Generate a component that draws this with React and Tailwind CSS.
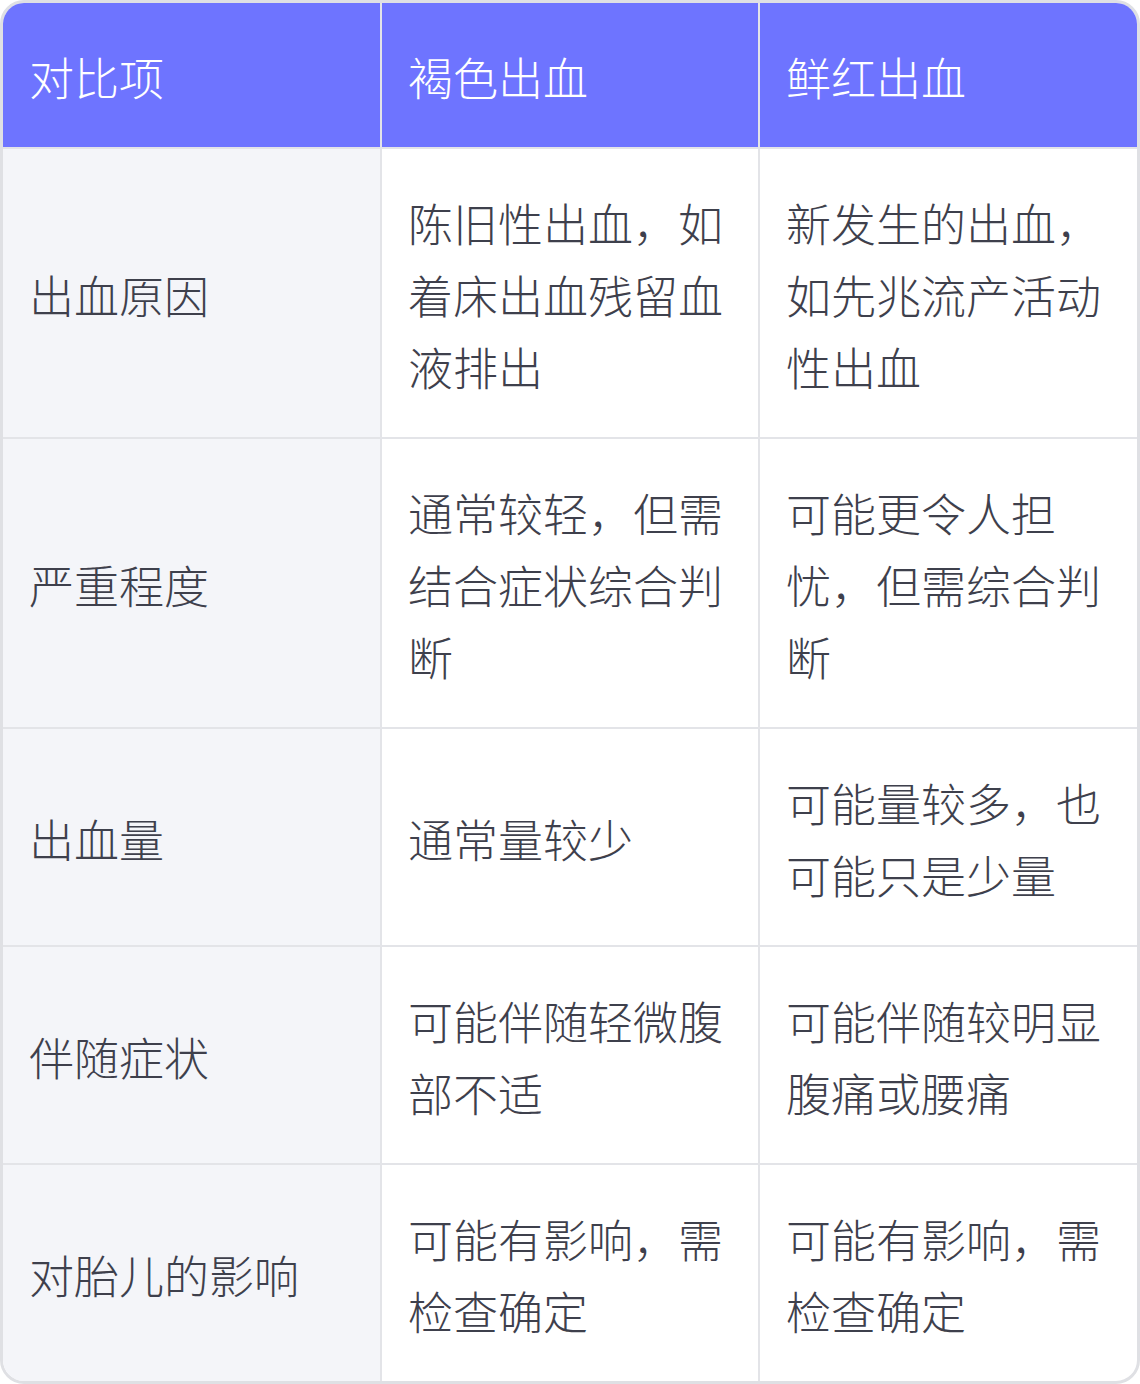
const headers = ["对比项", "褐色出血", "鲜红出血"];

const rows = [
  ["出血原因", "陈旧性出血，如着床出血残留血液排出", "新发生的出血，如先兆流产活动性出血"],
  ["严重程度", "通常较轻，但需结合症状综合判断", "可能更令人担忧，但需综合判断"],
  ["出血量", "通常量较少", "可能量较多，也可能只是少量"],
  ["伴随症状", "可能伴随轻微腹部不适", "可能伴随较明显腹痛或腰痛"],
  ["对胎儿的影响", "可能有影响，需检查确定", "可能有影响，需检查确定"],
];

export default function App() {
  return (
    <div className="w-[1140px] bg-white" style={{ fontFamily: '"Noto Sans CJK SC", "Noto Sans", sans-serif' }}>
      <div className="overflow-hidden rounded-[24px] border-[3px] border-[#dfe0e4]">
        <table className="w-full table-fixed border-collapse text-[45px] font-light leading-[72px] text-[#3e404c]">
          <thead>
            <tr className="bg-[#6e74ff] text-white">
              {headers.map((h, i) => (
                <th
                  key={h}
                  className={`px-[26px] pt-[38px] pb-[34px] text-left font-light border-b-2 border-[#e3e4e8] ${i > 0 ? "border-l-2" : ""}`}
                >
                  {h}
                </th>
              ))}
            </tr>
          </thead>
          <tbody>
            {rows.map((r, ri) => (
              <tr key={ri} className={ri < rows.length - 1 ? "border-b-2 border-[#e3e4e8]" : ""}>
                <td className="bg-[#f4f5f9] px-[26px] pt-[38px] pb-[34px] align-middle">{r[0]}</td>
                <td className="border-l-2 border-[#e3e4e8] px-[26px] pt-[38px] pb-[34px] align-middle">{r[1]}</td>
                <td className="border-l-2 border-[#e3e4e8] px-[26px] pt-[38px] pb-[34px] align-middle">{r[2]}</td>
              </tr>
            ))}
          </tbody>
        </table>
      </div>
    </div>
  );
}
